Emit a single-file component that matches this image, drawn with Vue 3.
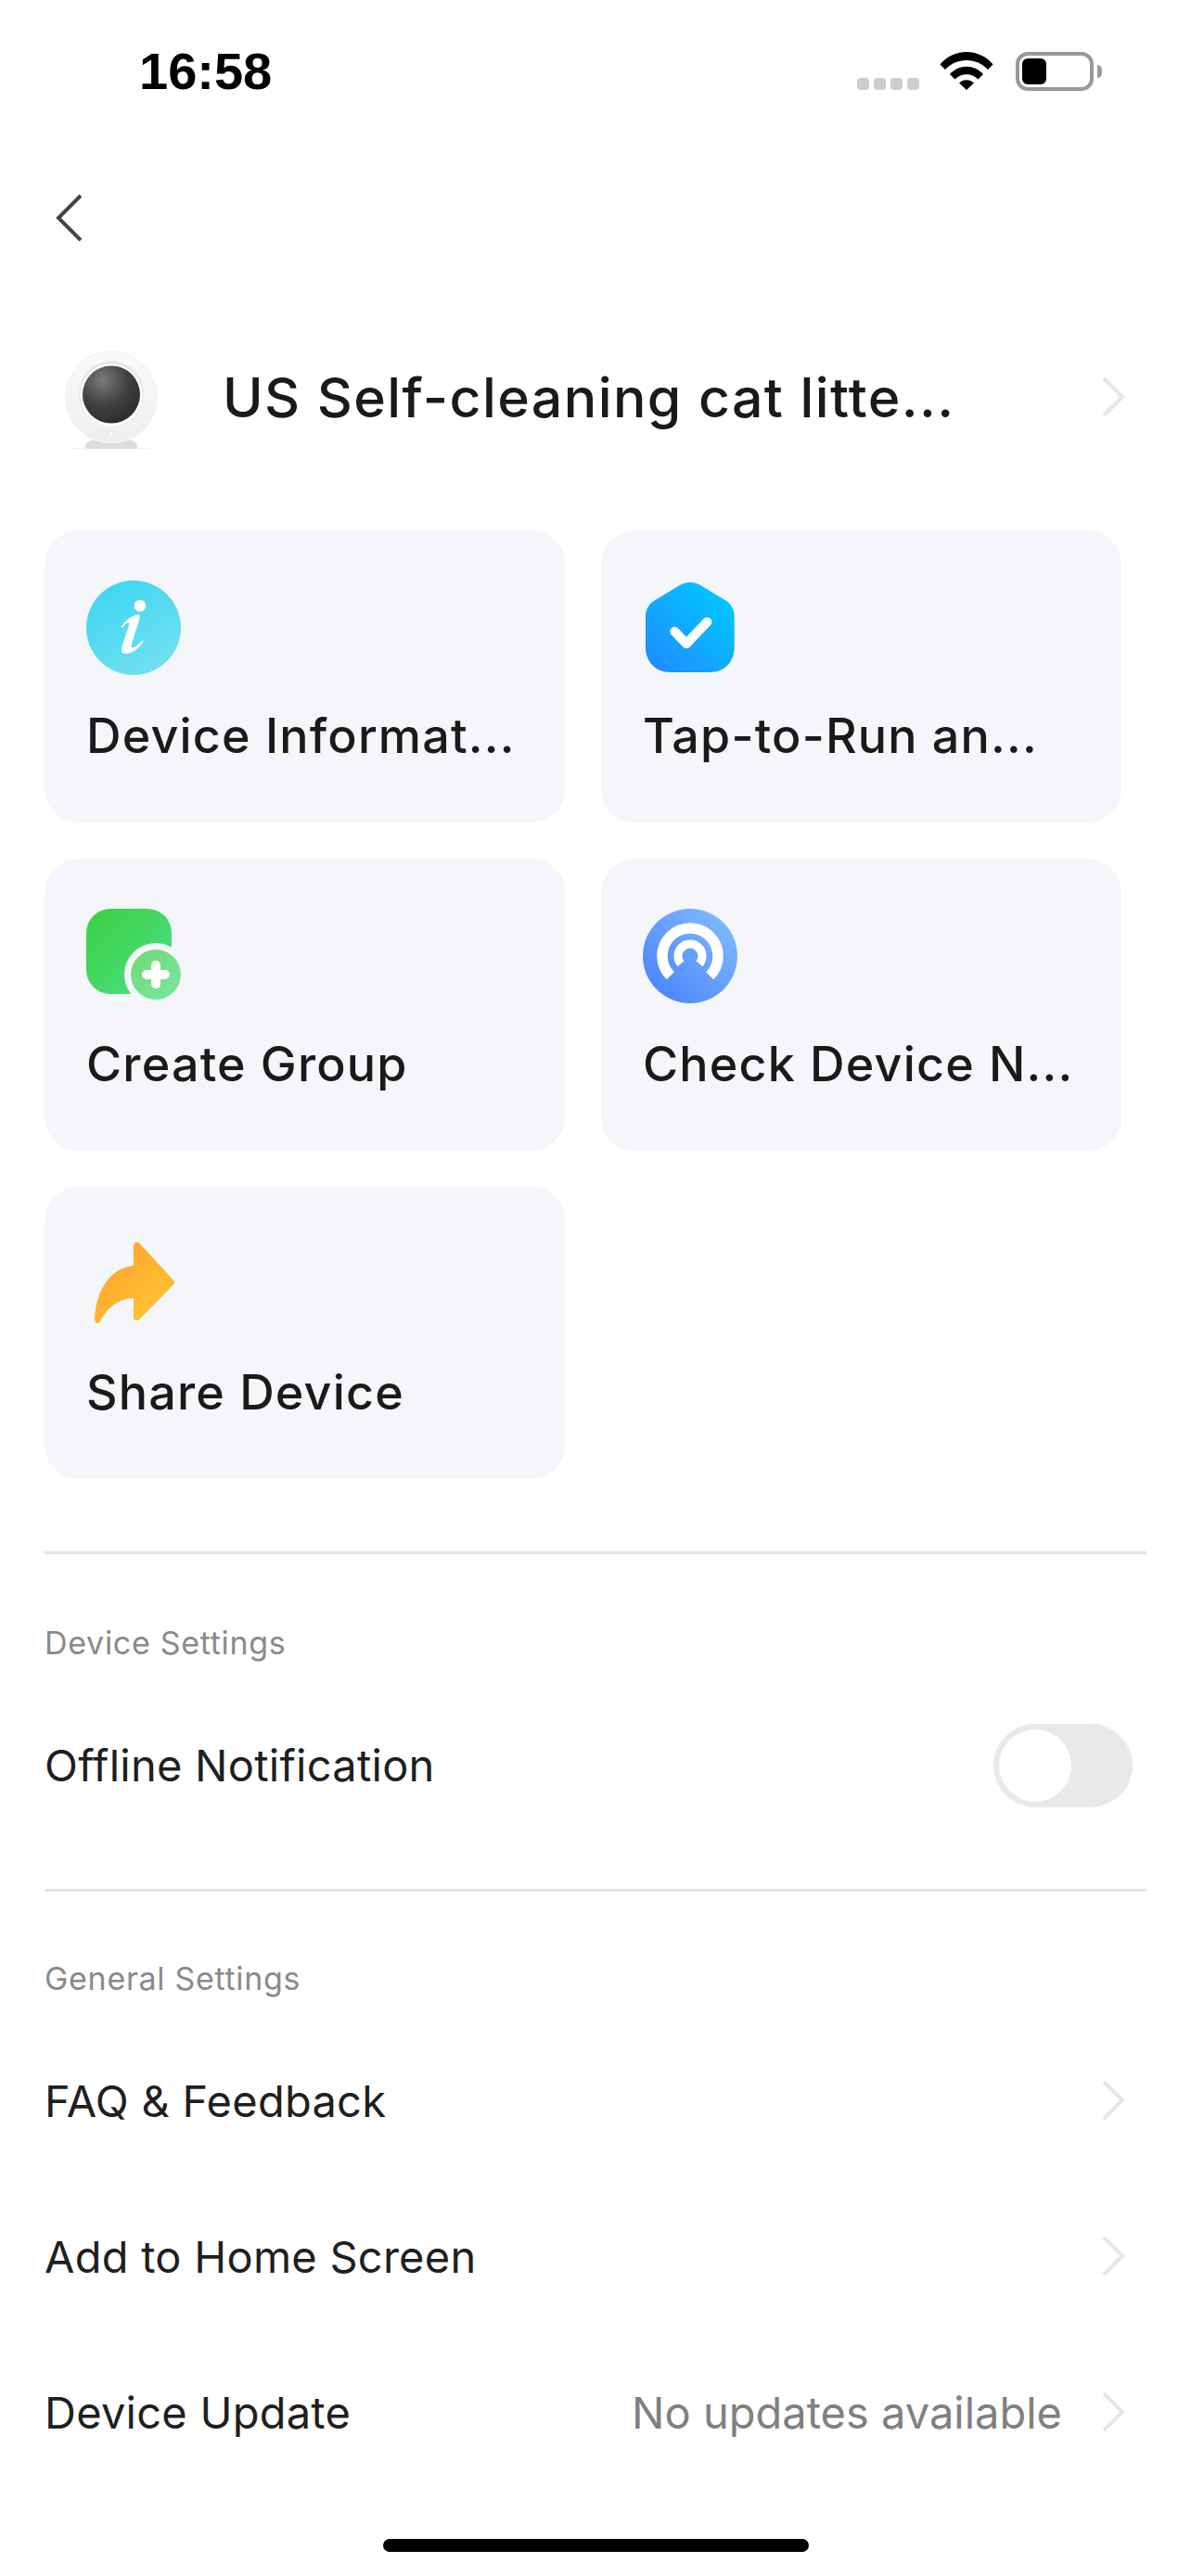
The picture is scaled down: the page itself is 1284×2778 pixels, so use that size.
<template>
  <div class="page">
    <div class="status-bar">
      <span class="time">16:58</span>
      <div class="status-icons">
        <div class="signal"><i></i><i></i><i></i><i></i></div>
        <svg class="wifi" width="58" height="42" viewBox="0 0 58 42">
          <path d="M0.5 14.5C15 -3.5 43 -3.5 57.5 14.5L52 20C40 6.5 18 6.5 6 20Z" fill="#000" />
          <path d="M11 25C21 14 37 14 47 25L41.5 30.5C34.5 23.5 23.5 23.5 16.5 30.5Z" fill="#000" />
          <path d="M21 34.5C25.5 30 32.5 30 37 34.5L29 42Z" fill="#000" />
        </svg>
        <div class="battery">
          <div class="battery-body"><div class="battery-level"></div></div>
          <div class="battery-cap"></div>
        </div>
      </div>
    </div>

    <div class="nav">
      <svg width="30" height="52" viewBox="0 0 30 52">
        <path d="M28 2L4 26L28 50" fill="none" stroke="#444" stroke-width="4" />
      </svg>
    </div>

    <div class="device-head">
      <svg class="device-pic" width="120" height="120" viewBox="0 0 120 120">
        <defs>
          <radialGradient id="lens" cx="35%" cy="25%" r="80%">
            <stop offset="0" stop-color="#7a7a7a" />
            <stop offset="0.55" stop-color="#404040" />
            <stop offset="1" stop-color="#2c2c2c" />
          </radialGradient>
          <linearGradient id="shell" x1="0" y1="0" x2="0" y2="1">
            <stop offset="0" stop-color="#fafafa" />
            <stop offset="1" stop-color="#eeeeee" />
          </linearGradient>
        </defs>
        <rect x="17" y="115.5" width="86" height="1" fill="#ececec" />
        <path d="M32 113C32 110 35 108 40 106H80C85 108 88 110 88 113V114C88 115.5 87 116 86 116H34C33 116 32 115.5 32 114Z" fill="#dcdcdc" />
        <circle cx="60" cy="60.5" r="49.5" fill="url(#shell)" stroke="#f2f2f2" />
        <circle cx="60" cy="56" r="35" fill="#e8e8e8" />
        <circle cx="60" cy="58" r="33.5" fill="#fff" />
        <circle cx="60" cy="57.5" r="31" fill="url(#lens)" />
        <circle cx="60" cy="100" r="3.5" fill="#f6f6f6" stroke="#e4e4e4" />
      </svg>
      <span class="device-name">US Self-cleaning cat litte...</span>
      <svg class="chevron" width="26" height="44" viewBox="0 0 26 44">
        <path d="M3 2L23 22L3 42" fill="none" stroke="#e6e6e6" stroke-width="4" />
      </svg>
    </div>

    <div class="cards">
      <div class="card">
        <svg class="card-icon" width="102" height="102" viewBox="0 0 102 102">
          <defs>
            <linearGradient id="gInfo" x1="0.25" y1="0.1" x2="0.8" y2="0.95">
              <stop offset="0" stop-color="#43d6f1" />
              <stop offset="1" stop-color="#72e0f0" />
            </linearGradient>
          </defs>
          <circle cx="51" cy="51" r="51" fill="url(#gInfo)" />
          <circle cx="58" cy="27.3" r="6.3" fill="#fff" />
          <path d="M37.7 50C42 43 50 37 56 36.7C58.5 36.6 58 40 57 43L50 65C48.5 70 48.5 72.5 50 72.5C53 72.5 57 68 61 64.5L61.5 66C57 73 49 79.5 42 79C37 78.7 38 73 39.5 68L46 48C47 45 45 45 43 46.5L38.5 51Z" fill="#fff" />
        </svg>
        <span class="card-label">Device Informat...</span>
      </div>
      <div class="card">
        <svg class="card-icon" width="102" height="102" viewBox="0 0 102 102">
          <defs>
            <linearGradient id="gTap" x1="0.9" y1="0.1" x2="0.1" y2="0.9">
              <stop offset="0" stop-color="#00c8ff" />
              <stop offset="1" stop-color="#1e8fff" />
            </linearGradient>
          </defs>
          <path d="M40 5C47 1 55 1 62 5L90 22C95 25 98.7 31 98.7 39V72C98.7 88 88 99 72 99H30C14 99 3 88 3 72V39C3 31 7 25 12 22Z" fill="url(#gTap)" />
          <path d="M34.3 55L47 68.3L69.3 44.7" fill="none" stroke="#fff" stroke-width="10" stroke-linecap="round" stroke-linejoin="round" />
        </svg>
        <span class="card-label">Tap-to-Run an...</span>
      </div>
      <div class="card">
        <svg class="card-icon" width="102" height="102" viewBox="0 0 102 102">
          <defs>
            <linearGradient id="gGroup" x1="0" y1="0" x2="1" y2="1">
              <stop offset="0" stop-color="#3ed03e" />
              <stop offset="1" stop-color="#4ae08e" />
            </linearGradient>
            <linearGradient id="gPlus" x1="0" y1="0" x2="1" y2="1">
              <stop offset="0" stop-color="#72d872" />
              <stop offset="1" stop-color="#78e8a4" />
            </linearGradient>
          </defs>
          <rect x="0" y="0" width="92" height="92" rx="26" fill="url(#gGroup)" />
          <circle cx="75" cy="71" r="34" fill="#f5f6fa" />
          <circle cx="75" cy="71" r="27" fill="url(#gPlus)" />
          <path d="M65 71H85M75 61V81" stroke="#fff" stroke-width="10" stroke-linecap="round" />
        </svg>
        <span class="card-label">Create Group</span>
      </div>
      <div class="card">
        <svg class="card-icon" width="102" height="102" viewBox="0 0 102 102">
          <defs>
            <linearGradient id="gNet" x1="0.1" y1="0.9" x2="0.9" y2="0.1">
              <stop offset="0" stop-color="#4a84fa" />
              <stop offset="1" stop-color="#80baff" />
            </linearGradient>
          </defs>
          <circle cx="51" cy="51" r="51" fill="url(#gNet)" />
          <path d="M29.8 72.2A30 30 0 1 1 72.2 72.2" fill="none" stroke="#fff" stroke-width="11.5" />
          <path d="M41 59.4A13 13 0 1 1 61 59.4" fill="none" stroke="#fff" stroke-width="9" />
        </svg>
        <span class="card-label">Check Device N...</span>
      </div>
      <div class="card">
        <svg class="card-icon" width="102" height="102" viewBox="0 0 102 102">
          <defs>
            <linearGradient id="gShare" x1="0.2" y1="0.1" x2="0.8" y2="0.8">
              <stop offset="0" stop-color="#ffa52e" />
              <stop offset="1" stop-color="#ffc033" />
            </linearGradient>
          </defs>
          <path d="M51 10C51 6 55 4.5 57.5 7L94 46.5C95.5 48 95.5 50 94 51.5L57.5 88.5C55 91 51 90 51 86V66C35 66 22 77 15.5 90.5C13.5 94.5 9 93.5 9 89C10 58 26 33 51 31Z" fill="url(#gShare)" />
        </svg>
        <span class="card-label">Share Device</span>
      </div>
    </div>

    <section class="settings first">
      <div class="section-title">Device Settings</div>
      <div class="row">
        <span class="row-label">Offline Notification</span>
        <div class="toggle"><div class="knob"></div></div>
      </div>
    </section>

    <section class="settings general">
      <div class="section-title">General Settings</div>
      <div v-for="item in generalRows" :key="item.label" class="row">
        <span class="row-label">{{ item.label }}</span>
        <span v-if="item.value" class="row-value">{{ item.value }}</span>
        <svg class="chevron" width="26" height="44" viewBox="0 0 26 44">
          <path d="M3 2L23 22L3 42" fill="none" stroke="#e6e6e6" stroke-width="4" />
        </svg>
      </div>
    </section>

    <div class="home-indicator"></div>
  </div>
</template>

<script setup>
const generalRows = [
  { label: 'FAQ & Feedback' },
  { label: 'Add to Home Screen' },
  { label: 'Device Update', value: 'No updates available' }
];
</script>

<style scoped>
.page {
  position: relative;
  width: 1284px;
  height: 2778px;
  overflow: hidden;
  background: #fff;
  font-family: Inter, "Noto Sans", sans-serif;
  color: #1a1a1a;
}

.status-bar {
  height: 190px;
  padding: 0 0 0 150px;
  box-sizing: border-box;
  display: flex;
  justify-content: space-between;
  align-items: flex-start;
}

.time {
  margin-top: 44px;
  font-family: "Liberation Sans", sans-serif;
  font-size: 56px;
  line-height: 66px;
  font-weight: 700;
  color: #000;
}

.status-icons {
  margin-top: 55px;
  margin-right: 96px;
  display: flex;
  align-items: flex-end;
}

.signal {
  display: flex;
  gap: 5px;
  margin-right: 22px;
  margin-bottom: 1px;
}

.signal i {
  width: 13px;
  height: 13px;
  border-radius: 4px;
  background: #cdcdcd;
}

.wifi {
  margin-right: 24px;
  margin-bottom: 1px;
}

.battery {
  display: flex;
  align-items: center;
}

.battery-body {
  width: 84px;
  height: 42px;
  box-sizing: border-box;
  border: 4px solid #999;
  border-radius: 13px;
  padding: 3px;
}

.battery-level {
  width: 26px;
  height: 100%;
  background: #000;
  border-radius: 6px;
}

.battery-cap {
  width: 5px;
  height: 14px;
  margin-left: 4px;
  background: #999;
  border-radius: 0 7px 7px 0;
}

.nav {
  height: 90px;
  padding-left: 59px;
  display: flex;
  align-items: center;
}

.device-head {
  margin-top: 88px;
  height: 120px;
  padding: 0 71px 0 60px;
  display: flex;
  align-items: center;
}

.device-pic {
  flex: none;
  margin-right: 60px;
}

.device-name {
  flex: 1;
  font-size: 59px;
  font-weight: 500;
  letter-spacing: 1.4px;
  color: #1a1a1a;
}

.chevron {
  flex: none;
}

.cards {
  margin-top: 84px;
  padding: 0 75px 0 48px;
  display: grid;
  grid-template-columns: 561px 561px;
  grid-auto-rows: 315px;
  gap: 39px;
}

.card {
  border-radius: 36px;
  background: #f5f6fa;
  padding: 54px 20px 0 45px;
  box-sizing: border-box;
}

.card-icon {
  display: block;
}

.card-label {
  display: block;
  margin-top: 30px;
  font-size: 52px;
  line-height: 72px;
  font-weight: 500;
  letter-spacing: 1.2px;
  color: #1a1a1a;
  white-space: nowrap;
}

.settings {
  margin: 0 48px;
  border-top: 3px solid #e3e3e3;
}

.settings.first {
  margin-top: 78px;
  height: 361px;
}

.section-title {
  padding-top: 74px;
  margin-bottom: 25px;
  font-size: 34px;
  line-height: 44px;
  letter-spacing: 0.7px;
  color: #8a8a8a;
}

.general .section-title {
  padding-top: 72px;
}

.row {
  height: 168px;
  display: flex;
  align-items: center;
}

.row-label {
  flex: 1;
  font-size: 47px;
  letter-spacing: 0.25px;
  color: #1f1f1f;
}

.row-value {
  font-size: 47px;
  color: #808080;
  margin-right: 42px;
}

.row .chevron {
  margin-right: 23px;
}

.toggle {
  width: 150px;
  height: 90px;
  margin-top: 2px;
  margin-right: 15px;
  padding: 6px;
  box-sizing: border-box;
  border-radius: 45px;
  background: #e9e9e9;
}

.knob {
  width: 78px;
  height: 78px;
  border-radius: 50%;
  background: #fff;
}

.home-indicator {
  position: absolute;
  left: 413px;
  bottom: 26px;
  width: 459px;
  height: 14px;
  border-radius: 7px;
  background: #000;
}
</style>
